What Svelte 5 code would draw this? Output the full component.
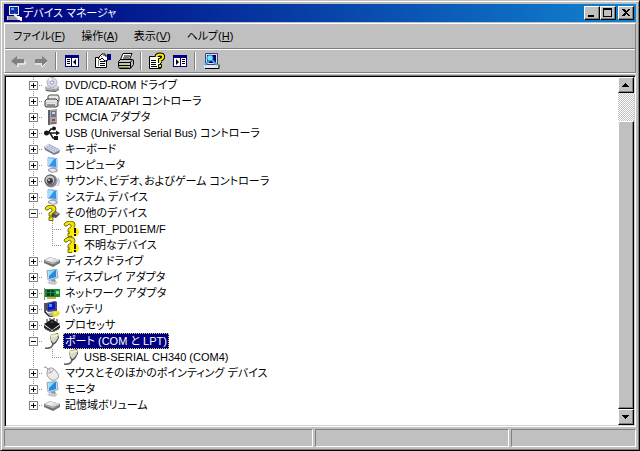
<script>
  let selected = $state('port');

  const tree = [
    { id: 'dvd', icon: 'cd', label: 'DVD/CD-ROM ドライブ' },
    { id: 'ide', icon: 'ide', label: 'IDE ATA/ATAPI コントローラ' },
    { id: 'pcmcia', icon: 'card', label: 'PCMCIA アダプタ' },
    { id: 'usb', icon: 'usb', label: 'USB (Universal Serial Bus) コントローラ' },
    { id: 'kbd', icon: 'keyboard', label: 'キーボード' },
    { id: 'pc', icon: 'computer', label: 'コンピュータ' },
    { id: 'sound', icon: 'sound', label: 'サウンド、ビデオ、およびゲーム コントローラ' },
    { id: 'sys', icon: 'computer', label: 'システム デバイス' },
    {
      id: 'other', icon: 'unknown', label: 'その他のデバイス',
      children: [
        { id: 'ert', icon: 'warning', label: 'ERT_PD01EM/F' },
        { id: 'unk', icon: 'warning', label: '不明なデバイス' }
      ]
    },
    { id: 'disk', icon: 'disk', label: 'ディスク ドライブ' },
    { id: 'display', icon: 'monitor', label: 'ディスプレイ アダプタ' },
    { id: 'net', icon: 'network', label: 'ネットワーク アダプタ' },
    { id: 'bat', icon: 'battery', label: 'バッテリ' },
    { id: 'cpu', icon: 'cpu', label: 'プロセッサ' },
    {
      id: 'port', icon: 'port', label: 'ポート (COM と LPT)',
      children: [{ id: 'ch340', icon: 'port', label: 'USB-SERIAL CH340 (COM4)' }]
    },
    { id: 'mouse', icon: 'mouse', label: 'マウスとそのほかのポインティング デバイス' },
    { id: 'mon', icon: 'monitor', label: 'モニタ' },
    { id: 'vol', icon: 'disk', label: '記憶域ボリューム' }
  ];

  let collapsed = $state({});

  const menus = [
    ['ファイル', 'F'],
    ['操作', 'A'],
    ['表示', 'V'],
    ['ヘルプ', 'H']
  ];

  const tools = [
    [['back', '戻る'], ['forward', '進む']],
    [['paneleft', 'コンソール ツリーの表示']],
    [['props', 'プロパティ'], ['print', '印刷']],
    [['help', 'ヘルプ'], ['paneright', '操作ウィンドウの表示']],
    [['scan', 'ハードウェア変更のスキャン']]
  ];
</script>

{#snippet icon(name)}
  <svg class="icon" viewBox="0 0 16 16" aria-hidden="true">
    {#if name === 'cd'}
      <path d="M1 10l4-2 10 1v3l-4 3-9-1-1-2z" fill="#b0b0b4" />
      <path d="M1 10l4-2 10 1-4 3z" fill="#dcdce0" />
      <path d="M2 13l9 1 4-2v1l-4 2-9-1z" fill="#606064" />
      <circle cx="8" cy="5.5" r="5" fill="#d8d8ec" stroke="#a4a4b8" stroke-width=".8" />
      <path d="M8 5.5L4.500 2A5 5 0 0 1 7 .8z" fill="#fff" />
      <circle cx="8" cy="5.500" r="1.600" fill="#fff" stroke="#8080a0" stroke-width=".8" />
      <path d="M9 13h2" stroke="#20a040" />
    {:else if name === 'ide'}
      <path d="M4 3l2-1h8l1 2v4l-2 1H4z" fill="#e8e8e8" stroke="#505050" />
      <path d="M1 8l2-2h9l2 2v5l-2 1H2l-1-1z" fill="#d0d0d0" stroke="#404040" />
      <path d="M2 8h11M3 11h9" stroke="#fff" />
      <path d="M3 12h8" stroke="#444" />
    {:else if name === 'card'}
      <path d="M4 1l9-1v15l-8 1z" fill="#a4a4a8" />
      <path d="M4 1l2 0v15H4z" fill="#606068" />
      <path d="M7 2h5v6H7z" fill="#68788c" />
      <path d="M8 3h3v2H8z" fill="#c8d4e0" />
      <path d="M8 10h3v2H8z" fill="#d03020" />
      <path d="M7 14h5" stroke="#444" />
    {:else if name === 'usb'}
      <path d="M2 8h11M4 8l3-4h3M6 8l3 5h3" fill="none" stroke="#181818" stroke-width="1.500" />
      <circle cx="2.500" cy="8" r="2.500" fill="#181818" />
      <circle cx="10" cy="3.500" r="2" fill="#181818" />
      <path d="M12 5.500L16 8l-4 2.500zM10 11h4v4h-4z" fill="#181818" />
    {:else if name === 'keyboard'}
      <path d="M0 6l5-3 11 6-1 3-5 2L1 9z" fill="#7c8094" />
      <path d="M0 6l5-3 11 6-6 3z" fill="#d4d8ea" />
      <path d="M3 6l8 4.500M5 5l8 4.500M6 4l8 4" stroke="#8c90b0" stroke-dasharray="1 1" />
    {:else if name === 'computer'}
      <path d="M4 .5l9 1v9l-9-1z" fill="#e8f4ff" stroke="#88b0dc" />
      <path d="M5 1l7 1v8l-7-1z" fill="#2c94ec" />
      <path d="M5 1l5 1-5 7z" fill="#a0e0ff" />
      <path d="M4 12l5-2 5 2-1 3-5 1-4-2z" fill="#a4a4b0" />
      <path d="M5 12h6l1 2-4 1z" fill="#ececf4" />
    {:else if name === 'monitor'}
      <path d="M3 1.500l10-1 1 8-9 3-1-1z" fill="#d0dcec" stroke="#88a4c0" />
      <path d="M5 2l7-1v7l-7 2z" fill="#208ce0" />
      <path d="M5 2l6-1-6 6z" fill="#88dcff" />
      <path d="M7 11l4-1 1 3-4 1z" fill="#909098" />
      <path d="M3 13l5-1 6 1-3 3-6-1z" fill="#c4c8d0" />
    {:else if name === 'sound'}
      <circle cx="7" cy="8" r="6.500" fill="#88888c" />
      <circle cx="6" cy="7" r="5" fill="#c8c8cc" stroke="#505054" />
      <circle cx="6" cy="8" r="3" fill="#3c3c40" />
      <circle cx="5" cy="7" r="1" fill="#d0d0d0" />
      <path d="M12 10q2-2 0-5M13 13q4-4 1-8" fill="none" stroke="#98a8c0" />
    {:else if name === 'unknown' || name === 'warning'}
      {#if name === 'unknown'}
        <path d="M8 8l4-2 4 3-4 4-4-1z" fill="#505054" />
        <path d="M10 8l3-1 2 2-3 1z" fill="#a4a4a8" />
      {/if}
      <path d="M1 3l2-2 4-1 4 1 1 3-1 3-3 2v2H5V8l3-2V4L6 3 4 5H2z" fill="#f4e400" stroke="#585000" stroke-width=".8" />
      <path d="M5 12h4v3.500H5z" fill="#f4e400" stroke="#585000" stroke-width=".8" />
      {#if name === 'warning'}
        <circle cx="11.500" cy="11" r="4.500" fill="#ffec00" />
        <path d="M11 7h2v5h-2zM11 13h2v2h-2z" fill="#181800" />
      {/if}
    {:else if name === 'disk'}
      <path d="M0 7l6-3 10 3v3l-7 4-9-4z" fill="#707074" />
      <path d="M0 7l6-3 10 3-7 3z" fill="#dcdce0" />
      <path d="M1 8l8 3 6-3" fill="none" stroke="#b8b8bc" />
      <path d="M3 7l4-2 3 1-4 2z" fill="#f4f4f4" />
      <path d="M12 10h2" stroke="#30b040" />
    {:else if name === 'network'}
      <path d="M0 3h1v12H0z" fill="#888" />
      <path d="M1 4h15v8H1z" fill="#168838" />
      <path d="M3 5h3v2H3zM7 5h3v2H7zM3 8h3v3H3zM7 8h3v3H7z" fill="#083c20" />
      <path d="M12 6h3v3h-3z" fill="#80e080" />
      <path d="M3 12h9v2H3z" fill="#d0b030" />
    {:else if name === 'battery'}
      <path d="M2 2l9-2 2 1v9l-9 1-2-2z" fill="#4c4c68" />
      <path d="M4 3l7-2v7l-7 1z" fill="#1010d8" />
      <path d="M5 3h3v3H5z" fill="#38a0ff" />
      <path d="M1 2v9l4 4h5" fill="none" stroke="#202028" stroke-width="1.500" />
      <path d="M3 12l8-1 2 2-7 2z" fill="#b0b0b8" />
      <path d="M9 11l5-1 2 2-2 3-5 1-1-2z" fill="#e8d820" />
      <path d="M10 12h3" stroke="#fffcb0" />
    {:else if name === 'cpu'}
      <path d="M0 7l8-5 8 5-8 6z" fill="#181818" />
      <path d="M0 8l8 6 8-6v3l-8 4-8-4z" fill="#282828" />
      <path d="M2 10v3M4 11v3M6 12v3M10 12v3M12 11v3M14 10v3M3 2v3M6 1v2M10 1v2M13 2v3" stroke="#202020" />
      <path d="M6 5l2-1 2 1-2 1z" fill="#505050" />
    {:else if name === 'port'}
      <path d="M1 15q7 1 8-4" fill="none" stroke="#606060" stroke-width="1.500" />
      <path d="M6 2l8-2 1 5-3 5-3 2-2-3z" fill="#505050" />
      <path d="M7 2l6-1 1 4-3 4-2 1-2-3z" fill="#d8d8d0" />
      <path d="M6 2l8-1v2L7 5z" fill="#f4f0a8" />
    {:else if name === 'mouse'}
      <path d="M4 4Q0 0 1 3" fill="none" stroke="#888" />
      <path d="M4 4Q8 1 12 6T14 13Q10 17 6 14T3 7z" fill="#ececec" stroke="#9c9ca0" />
      <path d="M4 8q4 1 6-4M7 7l-2-3" fill="none" stroke="#a8a8ac" />
    {/if}
  </svg>
{/snippet}

{#snippet toolIcon(name)}
  <svg class="tool-icon" viewBox="0 0 18 18" aria-hidden="true">
    {#if name === 'back'}
      <path d="M4 10l5 5v-3h7V9" fill="none" stroke="#fff" />
      <path d="M2 9l6-5v3h7v4H8v3z" fill="#808080" />
    {:else if name === 'forward'}
      <path d="M3 12h7v3l6-6" fill="none" stroke="#fff" />
      <path d="M16 9l-6-5v3H3v4h7v3z" fill="#808080" />
    {:else if name === 'paneleft' || name === 'paneright'}
      <path d="M2 3h14v12H2z" fill="#000080" />
      <path d="M3 6h12v8H3z" fill="#fff" />
      {#if name === 'paneleft'}
        <path d="M8 5h1v10H8z" fill="#000080" />
        <path d="M4 7h3v1H4zM4 9h3v1H4zM4 11h3v1H4zM13 7v6l-3-3z" fill="#000" />
      {:else}
        <path d="M9 5h1v10H9z" fill="#000080" />
        <path d="M11 7h3v1h-3zM11 9h3v1h-3zM11 11h3v1h-3zM5 7v6l3-3z" fill="#000" />
      {/if}
    {:else if name === 'props'}
      <path d="M1.500 5.500h11v10h-11z" fill="#fff" stroke="#000" />
      <path d="M4 9h1M4 11h1M4 13h1M6 9.500h5M6 11.500h5M6 13.500h5" stroke="#000" />
      <path d="M4 6l4-4 3 0v2h3v4l-3 1-3-3-2 2z" fill="#fff" stroke="#000" />
      <path d="M13 2h4v6h-4z" fill="#000080" />
      <path d="M5 5h1v1H5zM7 4h1v1H7zM9 3h1v1H9z" fill="#808080" />
    {:else if name === 'print'}
      <path d="M6 1.500h9l-3 7H3z" fill="#fff" stroke="#000" />
      <path d="M7 4h6M6 6h6" stroke="#000" />
      <path d="M1.500 9.500l2-2h12l1 1v4l-3 4h-11l-1-2z" fill="#c0c0c0" stroke="#000" />
      <path d="M2 10.500h11l3-3M2 13.500h12M13.500 10v6" fill="none" stroke="#000" />
      <path d="M3 15.500h9" stroke="#808000" />
      <path d="M9 12h3" stroke="#f0e000" />
    {:else if name === 'help'}
      <path d="M1.500 4.500h11v12h-11z" fill="#fff" stroke="#000" />
      <path d="M3 8.500h5M3 10.500h5M3 12.500h5M3 14.500h6" stroke="#000" />
      <path d="M8.500 5Q8.500 2.500 12 2.500T15 5Q15 7 12 8v3" fill="none" stroke="#000" stroke-width="4" />
      <path d="M8.500 5Q8.500 2.500 12 2.500T15 5Q15 7 12 8v3" fill="none" stroke="#f8ec00" stroke-width="2" />
      <path d="M10.500 12.500h3v3h-3z" fill="#f8ec00" stroke="#000" />
    {:else if name === 'scan'}
      <path d="M3.500 1.500h12v11h-12z" fill="#e0e0e0" stroke="#404080" />
      <path d="M5 3h9v8H5z" fill="#000080" />
      <path d="M2 13h14v3H2z" fill="#e8e8e8" />
      <path d="M3 16.500h14v-4" fill="none" stroke="#000" />
      <circle cx="8" cy="6" r="3" fill="#80e0f8" stroke="#2090d0" />
      <path d="M10 8l5 5M7 9l-4 4" stroke="#38a8e8" stroke-width="2" />
    {/if}
  </svg>
{/snippet}

{#snippet row(item, child, last)}
  <div class="row">
    {#if child}
      <span class="branch trunk"></span>
      <span class="branch elbow" class:last></span>
    {:else}
      <span class="branch trunk arm" class:last>
        <button
          class="expander"
          class:open={item.children && !collapsed[item.id]}
          aria-label="{item.label} の展開"
          onclick={() => (collapsed[item.id] = !collapsed[item.id])}
        ></button>
      </span>
    {/if}
    {@render icon(item.icon)}
    <button class="label" class:selected={selected === item.id} onclick={() => (selected = item.id)}>{item.label}</button>
  </div>
{/snippet}

<div class="window">
  <header class="titlebar">
    <svg class="app-icon" viewBox="0 0 16 16" aria-hidden="true">
      <path d="M3 1h10v9H3z" fill="#e8e8e8" />
      <path d="M4 2h8v7H4z" fill="#0c30a8" />
      <path d="M5 3h3v2H5z" fill="#48b0f0" />
      <path d="M1 11h13v4H1z" fill="#d4d4d4" />
      <path d="M2 12h8M2 14h9" stroke="#606070" />
      <path d="M8 9l3 3M12 12l3 3v-3" fill="none" stroke="#fff" stroke-width="2" />
    </svg>
    <h1>デバイス マネージャ</h1>
    <div class="controls">
      <button aria-label="最小化"><svg viewBox="0 0 12 10"><path d="M2 7h6v2H2z" /></svg></button>
      <button aria-label="最大化"><svg viewBox="0 0 12 10"><path d="M1 0h9v9H1zM2 2v6h7V2z" fill-rule="evenodd" /></svg></button>
      <button class="close" aria-label="閉じる"><svg viewBox="0 0 12 10"><path d="M2 1h2l2 2 2-2h2L7 4.500 10 8H8L6 6 4 8H2l3-3.500z" /></svg></button>
    </div>
  </header>

  <div class="bars">
    <nav class="menubar">
      {#each menus as [text, key]}
        <button>{text}(<u>{key}</u>)</button>
      {/each}
    </nav>
    <div class="toolbar" role="toolbar" aria-label="標準">
      {#each tools as group, i}
        {#if i > 0}<span class="separator"></span>{/if}
        {#each group as [name, title]}
          <button aria-label={title} disabled={name === 'back' || name === 'forward'}>{@render toolIcon(name)}</button>
        {/each}
      {/each}
    </div>
  </div>

  <main class="view">
    <ul class="tree">
      {#each tree as item, i}
        <li>
          {@render row(item, false, i === tree.length - 1)}
          {#if item.children && !collapsed[item.id]}
            <ul>
              {#each item.children as child, j}
                <li>{@render row(child, true, j === item.children.length - 1)}</li>
              {/each}
            </ul>
          {/if}
        </li>
      {/each}
    </ul>
    <div class="scrollbar">
      <button aria-label="上へスクロール"><svg viewBox="0 0 8 4"><path d="M0 4h7L3.500 0z" /></svg></button>
      <div class="track"><div class="thumb"></div></div>
      <button aria-label="下へスクロール"><svg viewBox="0 0 8 4"><path d="M0 0h7L3.500 4z" /></svg></button>
    </div>
  </main>

  <footer class="status">
    <span></span>
    <span></span>
    <span></span>
  </footer>
</div>

<style>
  .window {
    box-sizing: border-box;
    display: flex;
    flex-direction: column;
    min-height: 100vh;
    background: #c0c0c0;
    border: 1px solid;
    border-color: #c0c0c0 #000 #000 #c0c0c0;
    box-shadow: inset 1px 1px #fff, inset -1px -1px #808080;
    padding: 3px;
    font: 11px/16px 'Liberation Sans', 'Noto Sans CJK JP', sans-serif;
    font-feature-settings: 'palt';
    color: #000;
  }

  button {
    box-sizing: border-box;
    margin: 0;
    padding: 0;
    border: 0;
    background: none;
    font: inherit;
    font-feature-settings: inherit;
    color: inherit;
  }

  .titlebar {
    display: flex;
    align-items: center;
    height: 18px;
    padding: 0 2px;
    gap: 1px;
    background: linear-gradient(90deg, #000080, #1084d0);
    color: #fff;
  }

  .app-icon {
    width: 16px;
    height: 16px;
  }

  h1 {
    flex: 1;
    margin: 0;
    font: inherit;
  }

  .controls {
    display: flex;
  }

  .controls button,
  .scrollbar button {
    display: flex;
    align-items: center;
    justify-content: center;
    width: 16px;
    height: 14px;
    background: #c0c0c0;
    border: 1px solid;
    border-color: #fff #000 #000 #fff;
    box-shadow: inset -1px -1px #808080;
  }

  .controls svg {
    width: 12px;
    height: 10px;
    shape-rendering: crispEdges;
  }

  .controls .close {
    margin-left: 2px;
  }

  .bars {
    margin-top: 1px;
    border: 1px solid;
    border-color: #fff #808080 #808080 #fff;
    box-shadow: 0 1px #fff;
  }

  .menubar {
    display: flex;
    gap: 16px;
    height: 24px;
    padding: 0 8px;
    border-bottom: 1px solid #808080;
  }

  .toolbar {
    display: flex;
    align-items: center;
    height: 22px;
    padding-left: 1px;
    border-top: 1px solid #fff;
  }

  .toolbar button {
    display: flex;
    align-items: center;
    justify-content: center;
    width: 23px;
    height: 22px;
  }

  .tool-icon {
    width: 18px;
    height: 18px;
  }

  .separator {
    box-sizing: border-box;
    width: 2px;
    height: 18px;
    margin: 0 3px;
    border-left: 1px solid #808080;
    border-right: 1px solid #fff;
  }

  .view {
    flex: 1;
    display: flex;
    margin-top: 2px;
    background: #fff;
    border: 1px solid;
    border-color: #808080 #fff #fff #808080;
    box-shadow: inset 1px 1px #000, inset -1px -1px #d4d0c8;
    padding: 1px;
  }

  ul {
    margin: 0;
    padding: 0;
    list-style: none;
  }

  .tree {
    flex: 1;
    padding-left: 18px;
  }

  .row {
    display: flex;
    align-items: center;
    height: 16px;
  }

  .branch {
    display: flex;
    align-items: center;
    justify-content: center;
    width: 19px;
    height: 16px;
    --up: repeating-linear-gradient(#909090 0 1px, transparent 1px 2px) 9px 0 / 1px 16px no-repeat;
    --half: repeating-linear-gradient(#909090 0 1px, transparent 1px 2px) 9px 0 / 1px 9px no-repeat;
    --side: repeating-linear-gradient(90deg, #909090 0 1px, transparent 1px 2px) 9px 8px / 10px 1px no-repeat;
  }

  .trunk {
    background: var(--up);
  }

  .arm,
  .elbow {
    background: var(--up), var(--side);
  }

  .last {
    background: var(--half), var(--side);
  }

  .expander {
    width: 9px;
    height: 9px;
    border: 1px solid #808080;
    background:
      linear-gradient(#000, #000) center / 5px 1px no-repeat,
      linear-gradient(#000, #000) center / 1px 5px no-repeat,
      #fff;
  }

  .expander.open {
    background: linear-gradient(#000, #000) center / 5px 1px no-repeat, #fff;
  }

  .icon {
    width: 16px;
    height: 16px;
    margin: 0 3px 0 1px;
  }

  .label {
    height: 16px;
    padding: 0 2px;
    white-space: nowrap;
  }

  .label.selected {
    background: #000080;
    color: #fff;
    outline: 1px dotted #d0d060;
    outline-offset: -1px;
  }

  .scrollbar {
    display: flex;
    flex-direction: column;
    width: 16px;
  }

  .scrollbar button {
    height: 16px;
  }

  .scrollbar svg {
    width: 8px;
    height: 4px;
    shape-rendering: crispEdges;
  }

  .track {
    flex: 1;
    display: flex;
    flex-direction: column;
    justify-content: flex-end;
    background: repeating-conic-gradient(#fff 0 25%, #c0c0c0 0 50%) 0 0 / 2px 2px;
  }

  .thumb {
    box-sizing: border-box;
    height: 91%;
    background: #c0c0c0;
    border: 1px solid;
    border-color: #fff #000 #000 #fff;
    box-shadow: inset -1px -1px #808080;
  }

  .status {
    display: grid;
    grid-template-columns: 62fr 39fr 25fr;
    gap: 2px;
    height: 18px;
    margin-top: 2px;
  }

  .status span {
    border: 1px solid;
    border-color: #808080 #fff #fff #808080;
  }
</style>
